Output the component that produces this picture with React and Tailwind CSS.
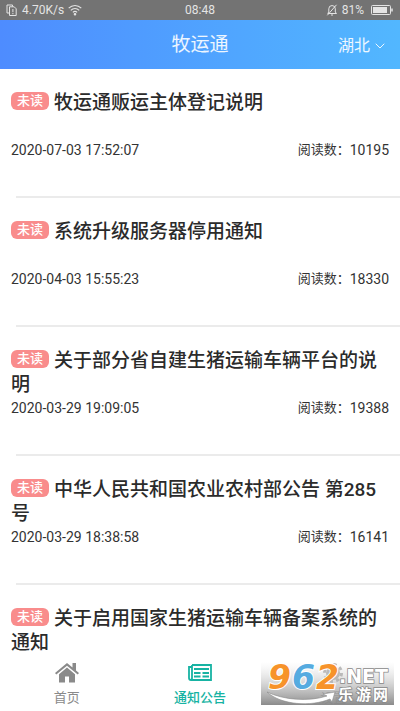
import { ChevronDown } from 'lucide-react'

const NOTICES = [
  { title: '牧运通贩运主体登记说明', time: '2020-07-03 17:52:07', reads: 10195 },
  { title: '系统升级服务器停用通知', time: '2020-04-03 15:55:23', reads: 18330 },
  { title: '关于部分省自建生猪运输车辆平台的说明', time: '2020-03-29 19:09:05', reads: 19388 },
  { title: '中华人民共和国农业农村部公告 第285号', time: '2020-03-29 18:38:58', reads: 16141 },
  { title: '关于启用国家生猪运输车辆备案系统的通知' }
]

function StatusBar() {
  return (
    <div className="grid h-5 shrink-0 grid-cols-3 items-center bg-[#737373] px-1.5 text-xs text-[#e4e4e4]">
      <div className="flex items-center gap-1">
        <svg className="h-3 w-3" viewBox="0 0 12 12" fill="none" stroke="currentColor" strokeWidth="1">
          <path d="M3 9H1V1h5.500v1.500" />
          <path d="M3.500 2.800h4.700l2 2v6.700H3.500z" />
          <path d="M6.900 5v3.200M6.900 9v1.200" />
        </svg>
        <span>4.70K/s</span>
        <svg className="h-3 w-3.5" viewBox="0 0 14 12" fill="none" stroke="currentColor" strokeWidth="1.200">
          <path d="M.7 4.200C4.300.6 9.700.6 13.300 4.200M2.800 6.300c2.400-2.400 6-2.400 8.400 0M4.900 8.400c1.200-1.200 3-1.200 4.200 0" />
          <circle cx="7" cy="10.300" r=".7" fill="currentColor" />
        </svg>
      </div>
      <div className="text-center">08:48</div>
      <div className="flex items-center justify-end gap-1">
        <svg className="h-3 w-3" viewBox="0 0 12 12" fill="none" stroke="currentColor" strokeWidth="1">
          <path d="M2 9.500h8.500L9.300 8V4.800a3.200 3.200 0 0 0-6.500 0V8L1.500 9.500M5 11h2M10.500.8L1.300 11.300" />
        </svg>
        <span>81%</span>
        <svg className="ml-0.5 h-2.5 w-6" viewBox="0 0 24 10" fill="none" stroke="currentColor">
          <rect x="1.500" y=".5" width="19" height="9" rx="1" />
          <rect x="3" y="2" width="14" height="6" fill="currentColor" stroke="none" />
          <path d="M22 3.500v3" strokeWidth="1.500" />
        </svg>
      </div>
    </div>
  )
}

function Header() {
  return (
    <header className="grid h-[49px] shrink-0 grid-cols-3 items-center bg-linear-to-r from-[#4e8cff] to-[#52b7ff] px-3 pt-0.5 text-white/90">
      <h1 className="col-start-2 text-center text-[19px]">牧运通</h1>
      <button type="button" className="flex items-center justify-end gap-0.5 text-base">
        湖北
        <ChevronDown className="h-4 w-4" strokeWidth={1.5} />
      </button>
    </header>
  )
}

function Notice({ title, time, reads }) {
  return (
    <li>
      <article className="px-[11px] pt-[22px] pb-[35px]">
        <h2 className="min-h-12 text-[19px] leading-6 font-medium text-[#2b2b2b]">
          <span className="mt-px mr-[5px] inline-flex h-[18px] w-[38px] items-center justify-center rounded-md bg-[#f98c8c] align-top text-[13px] leading-4 text-white">
            未读
          </span>
          {title}
        </h2>
        {time && (
          <div className="flex items-center justify-between text-sm leading-[22px] text-[#333]">
            <time>{time}</time>
            <span className="flex items-center">
              <span className="text-[13px]">阅读数：</span>
              {reads}
            </span>
          </div>
        )}
      </article>
      <div className="ml-4 h-0.5 bg-[#ebebeb]" />
    </li>
  )
}

function HomeIcon() {
  return (
    <svg className="h-5 w-6" viewBox="0 0 24 20" fill="currentColor">
      <path d="M12 0 0 10l1.300 1.600L12 2.800l10.700 8.800L24 10l-3-2.500V0h-3.500v4.600z" />
      <path d="M12 4.600 4 11.200V19.500h6v-6h4v6h6v-8.300z" />
    </svg>
  )
}

function NewsIcon() {
  return (
    <svg className="h-5 w-6" viewBox="0 0 24 20" fill="none" stroke="currentColor" strokeWidth="1.800">
      <path d="M4 2h19v15H3Q1 17 1 15V4h3M4 2v13Q4 17 3 17" />
      <path d="M6 6h15M6 10h6.500M14.500 10h6.500M6 13.500h6.500M14.500 13.500h6.500" />
    </svg>
  )
}

function GearIcon() {
  return (
    <svg className="h-5 w-6" viewBox="0 0 24 20" fill="none" stroke="currentColor">
      <circle cx="12" cy="10" r="5" strokeWidth="4" />
      <circle cx="12" cy="10" r="8.500" strokeWidth="3" strokeDasharray="3.340 3.340" />
    </svg>
  )
}

const TABS = [
  { label: '首页', icon: HomeIcon },
  { label: '通知公告', icon: NewsIcon, active: true },
  { label: '设置', icon: GearIcon }
]

function SiteMark() {
  return (
    <svg
      className="pointer-events-none absolute right-1.5 bottom-1.5 h-[43px] w-[133px]"
      viewBox="0 0 133 43"
      role="img"
      aria-label="962.NET 乐游网"
    >
      <defs>
        <linearGradient id="shade" x1="0" y1="0" x2="0" y2="1">
          <stop offset="0" stopColor="#fff" stopOpacity=".4" />
          <stop offset=".5" stopColor="#c4c4c4" stopOpacity=".7" />
          <stop offset="1" stopColor="#858585" stopOpacity=".95" />
        </linearGradient>
      </defs>
      <rect width="133" height="43" fill="url(#shade)" />
      <g
        fontFamily="DejaVu Sans, sans-serif"
        fontWeight="700"
        fontStyle="italic"
        fontSize="33"
        stroke="#fff"
        strokeWidth="2"
        paintOrder="stroke"
      >
        <text x="7" y="27" fill="#f7932a">9</text>
        <text x="31" y="27" fill="#55abe0">6</text>
        <text x="55" y="27" fill="#f7932a">2</text>
      </g>
      <path
        d="M6 30c17 8 41 10 60 4l-4-2 12-2-3 10-2-3C50 45 20 43 6 30z"
        fill="#fff"
        stroke="#8a8a8a"
        strokeWidth=".6"
      />
      <g fill="#fff" stroke="#888" strokeWidth="1.500" paintOrder="stroke" fontWeight="700">
        <text x="78" y="21" fontFamily="DejaVu Sans, sans-serif" fontSize="19">.NET</text>
        <g fontFamily="Noto Sans CJK SC, sans-serif" fontSize="15">
          <text x="77" y="38">乐</text>
          <text x="95" y="38">游</text>
          <text x="112" y="38">网</text>
        </g>
      </g>
    </svg>
  )
}

export default function App() {
  return (
    <div className="relative flex h-dvh flex-col overflow-hidden bg-white font-[Roboto,'Noto_Sans_CJK_SC',sans-serif]">
      <StatusBar />
      <Header />
      <main className="min-h-0 flex-1 overflow-y-auto [scrollbar-width:none]">
        <ul>
          {NOTICES.map((notice) => (
            <Notice key={notice.title} {...notice} />
          ))}
        </ul>
      </main>
      <nav className="grid h-[59px] shrink-0 grid-cols-3 bg-white">
        {TABS.map(({ label, icon: Icon, active }) => (
          <a
            key={label}
            href="#"
            className={`flex flex-col items-center gap-1 pt-[11px] text-[13px] leading-[22px] ${active ? 'font-medium text-[#17b3a3]' : 'text-[#8a8a8a]'}`}
          >
            <Icon />
            {label}
          </a>
        ))}
      </nav>
      <SiteMark />
    </div>
  )
}
